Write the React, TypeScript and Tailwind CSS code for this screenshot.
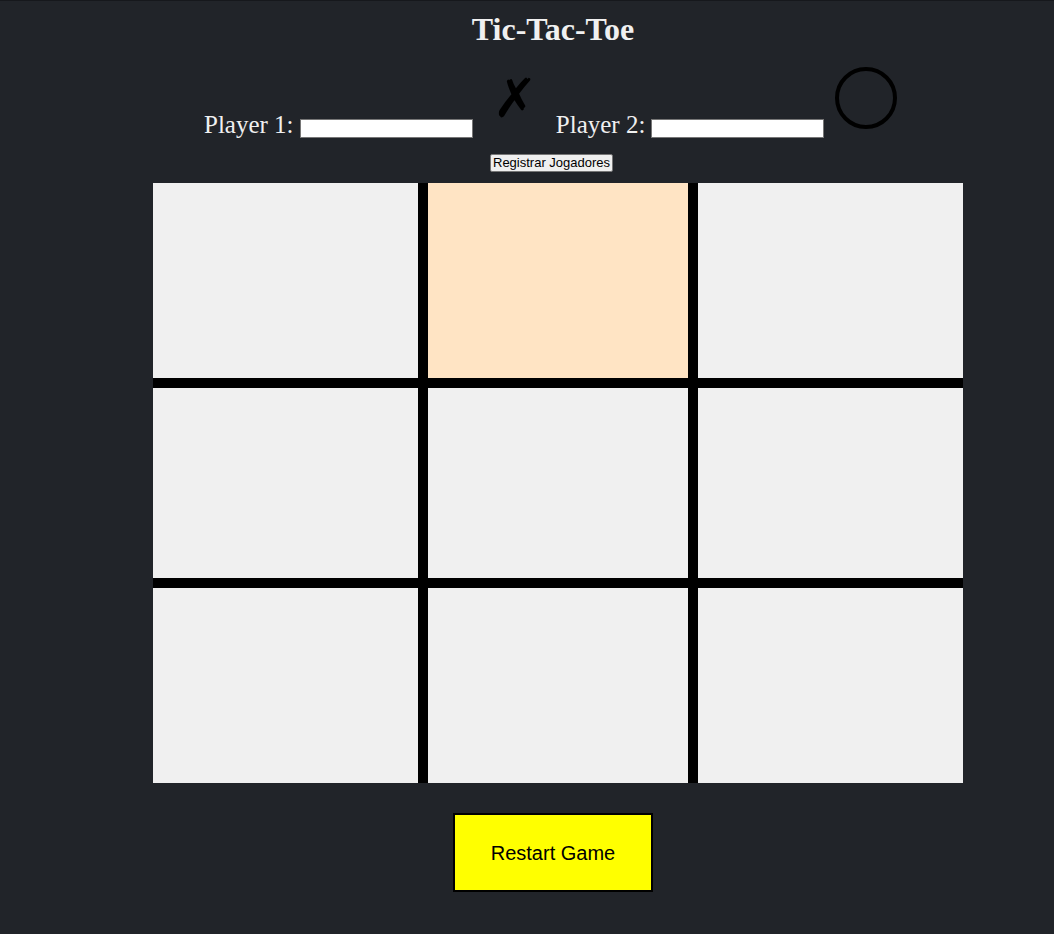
import React, { useState } from 'react';

const serif = { fontFamily: '"Liberation Serif", "Times New Roman", serif' };

export default function App() {
  const [cells, setCells] = useState<string[]>(Array(9).fill(''));
  const [p1, setP1] = useState('');
  const [p2, setP2] = useState('');

  // inner borders only, so the grid lines are 10px where two cells meet
  const borders = [
    'border-r-[5px] border-b-[5px]',
    'border-x-[5px] border-b-[5px]',
    'border-l-[5px] border-b-[5px]',
    'border-r-[5px] border-y-[5px]',
    'border-x-[5px] border-y-[5px]',
    'border-l-[5px] border-y-[5px]',
    'border-r-[5px] border-t-[5px]',
    'border-x-[5px] border-t-[5px]',
    'border-l-[5px] border-t-[5px]'
  ];

  return (
    <div className="min-h-[934px] w-[1054px] bg-[#212429] border-t border-[#16181c]" style={serif}>
      {/* Title */}
      <div className="flex justify-center pl-[52px] pt-[10px]">
        <h1 className="text-[32px] font-bold leading-[36px] text-[#f0f0f0]">Tic-Tac-Toe</h1>
      </div>

      {/* Players */}
      <div className="flex items-end pl-[204px] mt-[19px] h-[72px]">
        <span className="text-[25px] leading-[30px] text-[#f0f0f0] -mb-[2px]">Player 1:</span>
        <input
          value={p1}
          onChange={(e) => setP1(e.target.value)}
          className="ml-[6px] w-[173px] h-[19px] bg-white border border-[#767676] outline-none"
        />
        <span
          className="ml-[20px] mb-[12px] text-[54px] leading-[54px] text-black"
          style={{ fontFamily: '"DejaVu Sans", sans-serif' }}
        >
          ✗
        </span>
        <span className="ml-[18px] text-[25px] leading-[30px] text-[#f0f0f0] -mb-[2px]">Player 2:</span>
        <input
          value={p2}
          onChange={(e) => setP2(e.target.value)}
          className="ml-[6px] w-[173px] h-[19px] bg-white border border-[#767676] outline-none"
        />
        <div className="ml-[11px] mb-[9px] w-[62px] h-[62px] rounded-full border-[4px] border-black" />
      </div>

      {/* Register */}
      <div className="flex pl-[490px] mt-[16px]">
        <button
          className="h-[18px] px-[2px] bg-[#efefef] border border-[#767676] rounded-[2px] text-[13px] leading-[14px] text-black"
          style={{ fontFamily: '"Liberation Sans", Arial, sans-serif' }}
        >
          Registrar Jogadores
        </button>
      </div>

      {/* Board */}
      <div className="ml-[153px] mt-[11px] w-[810px] grid grid-cols-3">
        {cells.map((c, i) => (
          <div
            key={i}
            onClick={() => {
              if (c) return;
              const next = [...cells];
              next[i] = 'X';
              setCells(next);
            }}
            className={`h-[200px] border-black flex items-center justify-center text-6xl ${borders[i]} ${
              i === 1 ? 'bg-[#ffe4c4]' : 'bg-[#f0f0f0]'
            }`}
          >
            {c}
          </div>
        ))}
      </div>

      {/* Restart */}
      <div className="flex pl-[453px] mt-[30px]">
        <button
          onClick={() => setCells(Array(9).fill(''))}
          className="w-[200px] h-[79px] bg-[#ffff00] border-2 border-black text-[20px] text-black"
          style={{ fontFamily: '"Liberation Sans", Arial, sans-serif' }}
        >
          Restart Game
        </button>
      </div>
    </div>
  );
}
